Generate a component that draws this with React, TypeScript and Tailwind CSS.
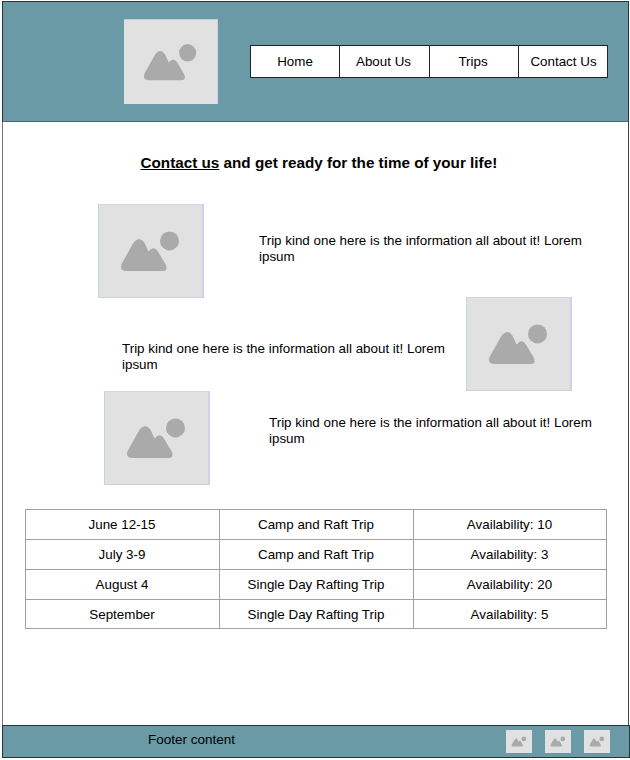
const navItems = ["Home", "About Us", "Trips", "Contact Us"];

const trips = [
  ["June 12-15", "Camp and Raft Trip", "Availability: 10"],
  ["July 3-9", "Camp and Raft Trip", "Availability: 3"],
  ["August 4", "Single Day Rafting Trip", "Availability: 20"],
  ["September", "Single Day Rafting Trip", "Availability: 5"],
];

function Placeholder({ className }: { className: string }) {
  return (
    <div className={`shrink-0 bg-[#e1e1e1] ${className}`}>
      <svg viewBox="1 1 103 92" preserveAspectRatio="none" className="block h-full w-full" fill="#aaaaaa">
        <path d="M35.6 38.5Q41 31.5 46.4 38.5L50.6 47.6Q55.6 41.3 59.8 47.2L67.8 60.8Q70.2 66.7 65 67H27.6Q21.3 66.6 23.6 60Z" />
        <circle cx="71.5" cy="36.9" r="9.5" />
      </svg>
    </div>
  );
}

function TripText({ className }: { className: string }) {
  return (
    <p className={`w-[340px] text-[13.38px] leading-4 ${className}`}>
      Trip kind one here is the information all about it! Lorem ipsum
    </p>
  );
}

const photo = "h-[94px] w-[106px] border border-t-[#d4d4e6] border-r-2 border-r-[#d3cdee] border-b-[#c5d3da] border-l-[#c5d3da]";

export default function App() {
  return (
    <div className="h-[760px] w-[630px] bg-white pt-px pl-[2px] font-['Liberation_Sans',Arial,sans-serif] text-[13.38px] text-black">
      <div className="flex h-[757px] w-[628px] flex-col">
        <header className="flex h-[121px] w-[627px] shrink-0 items-start border border-[#26373b] border-b-[#4c686e] bg-[#6a9aa6]">
          <Placeholder className="mt-[17px] ml-[121px] h-[85px] w-[94px] border-t border-r border-t-[#c3cfe0] border-r-[#d3cfe6]" />
          <nav className="mt-[43px] ml-8 grid h-[33px] w-[358px] grid-cols-[89px_90px_89px_89px] border-y border-l border-[#222]">
            {navItems.map((item) => (
              <a key={item} className="flex items-center justify-center border-r border-[#222] bg-white pt-0.5 pr-0.5 first:pr-0 last:pr-0 last:pl-px">
                {item}
              </a>
            ))}
          </nav>
        </header>

        <main className="flex w-[627px] grow flex-col border-x border-l-[#777] border-r-[#444]">
          <h1 className="mt-[31px] pl-[137.5px] text-[15.25px] leading-5 font-bold whitespace-nowrap">
            <span className="underline">Contact us</span> and get ready for the time of your life!
          </h1>

          <section className="mt-[31px] flex h-[282px] flex-col">
            <div className="flex h-[93px] pl-[95px]">
              <Placeholder className={photo} />
              <TripText className="mt-[29px] ml-[55px]" />
            </div>
            <div className="flex h-[94px] pl-[119px]">
              <TripText className="mt-[44px]" />
              <Placeholder className={`ml-1 ${photo}`} />
            </div>
            <div className="flex pl-[101px]">
              <Placeholder className={photo} />
              <TripText className="mt-[24px] ml-[59px]" />
            </div>
          </section>

          <div className="mt-[23px] ml-[22px] grid w-[582px] grid-cols-[194px_194px_193px] grid-rows-[30px_30px_30px_29px] border-t border-l border-[#a0a0a0]">
            {trips.flat().map((cell, i) => (
              <div key={i} className="flex items-center justify-center border-r border-b border-[#a0a0a0] pt-0.5 pr-px">
                {cell}
              </div>
            ))}
          </div>
        </main>

        <footer className="flex h-[33px] w-[628px] shrink-0 items-start border border-[#26373b] bg-[#6a9aa6]">
          <span className="mt-[5px] ml-[145px] w-[358px] text-[13.5px] leading-[18px]">Footer content</span>
          <div className="mt-1 flex gap-[13px]">
            <Placeholder className="h-[23px] w-[26px]" />
            <Placeholder className="h-[23px] w-[26px]" />
            <Placeholder className="h-[23px] w-[26px]" />
          </div>
        </footer>
      </div>
    </div>
  );
}
